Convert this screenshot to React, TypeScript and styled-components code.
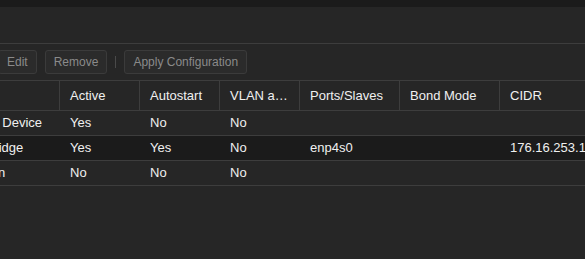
import React from "react";
import styled, { createGlobalStyle } from "styled-components";

type Row = {
  type: string;
  active: string;
  autostart: string;
  vlan: string;
  ports: string;
  bond: string;
  cidr: string;
  selected?: boolean;
};

const ROWS: Row[] = [
  { type: "Network Device", active: "Yes", autostart: "No", vlan: "No", ports: "", bond: "", cidr: "" },
  {
    type: "Linux Bridge",
    active: "Yes",
    autostart: "Yes",
    vlan: "No",
    ports: "enp4s0",
    bond: "",
    cidr: "176.16.253.1/24",
    selected: true,
  },
  { type: "Unknown", active: "No", autostart: "No", vlan: "No", ports: "", bond: "", cidr: "" },
];

const COLUMNS = [
  { label: "Type", width: 119 },
  { label: "Active", width: 80 },
  { label: "Autostart", width: 80 },
  { label: "VLAN aware", width: 80 },
  { label: "Ports/Slaves", width: 100 },
  { label: "Bond Mode", width: 100 },
  { label: "CIDR", width: 140 },
];

const App = () => {
  return (
    <>
      <GlobalStyle />
      <Page>
        <TopBand />
        <TitleArea />
        <Toolbar>
          <ToolButton disabled>Edit</ToolButton>
          <ToolButton disabled>Remove</ToolButton>
          <Separator />
          <ToolButton disabled>Apply Configuration</ToolButton>
        </Toolbar>
        <Grid>
          <HeaderRow>
            {COLUMNS.map(col => (
              <HeaderCell key={col.label} $width={col.width}>
                {col.label}
              </HeaderCell>
            ))}
          </HeaderRow>
          {ROWS.map(row => (
            <BodyRow key={row.type} $selected={row.selected}>
              <Cell $width={COLUMNS[0].width}>{row.type}</Cell>
              <Cell $width={COLUMNS[1].width}>{row.active}</Cell>
              <Cell $width={COLUMNS[2].width}>{row.autostart}</Cell>
              <Cell $width={COLUMNS[3].width}>{row.vlan}</Cell>
              <Cell $width={COLUMNS[4].width}>{row.ports}</Cell>
              <Cell $width={COLUMNS[5].width}>{row.bond}</Cell>
              <Cell $width={COLUMNS[6].width}>{row.cidr}</Cell>
            </BodyRow>
          ))}
        </Grid>
      </Page>
    </>
  );
};

const GlobalStyle = createGlobalStyle`
  html, body {
    margin: 0;
    padding: 0;
    background: #262626;
  }
  body {
    font-family: "Liberation Sans", Arial, sans-serif;
    overflow: hidden;
  }
`;

const Page = styled.div`
  width: 585px;
  height: 259px;
  overflow: hidden;
  background: #262626;
  display: flex;
  flex-direction: column;
`;

const TopBand = styled.div`
  height: 7px;
  background: #1b1b1b;
`;

const TitleArea = styled.div`
  height: 36px;
  border-bottom: 1px solid #3d3d3d;
`;

const Toolbar = styled.div`
  display: flex;
  align-items: center;
  gap: 8px;
  height: 36px;
  margin-left: -2px;
`;

const ToolButton = styled.button`
  height: 24px;
  padding: 0 8px;
  border: 1px solid #3b3b3b;
  border-radius: 3px;
  background: #2b2b2b;
  color: #8a8a8a;
  font-family: "Liberation Sans", Arial, sans-serif;
  font-size: 12px;
  white-space: nowrap;
`;

const Separator = styled.div`
  width: 1px;
  height: 12px;
  background: #4a4a4a;
`;

const Grid = styled.div`
  display: flex;
  flex-direction: column;
  margin-left: -59px;
`;

const HeaderRow = styled.div`
  display: flex;
  height: 29px;
  border-top: 1px solid #3d3d3d;
  border-bottom: 1px solid #3d3d3d;
`;

const HeaderCell = styled.div<{ $width: number }>`
  flex: 0 0 ${p => p.$width}px;
  box-sizing: border-box;
  padding: 0 10px;
  border-right: 1px solid #3d3d3d;
  display: flex;
  align-items: center;
  color: #f0f0f0;
  font-size: 13px;
  white-space: nowrap;
  overflow: hidden;
  text-overflow: ellipsis;
  line-height: 29px;
  display: block;
`;

const BodyRow = styled.div<{ $selected?: boolean }>`
  display: flex;
  height: 24px;
  border-bottom: 1px solid #3d3d3d;
  background: ${p => (p.$selected ? "#1b1b1b" : "#262626")};
`;

const Cell = styled.div<{ $width: number }>`
  flex: 0 0 ${p => p.$width}px;
  box-sizing: border-box;
  padding: 0 10px;
  color: #f0f0f0;
  font-size: 13px;
  line-height: 24px;
  white-space: nowrap;
  overflow: hidden;
`;

export default App;
